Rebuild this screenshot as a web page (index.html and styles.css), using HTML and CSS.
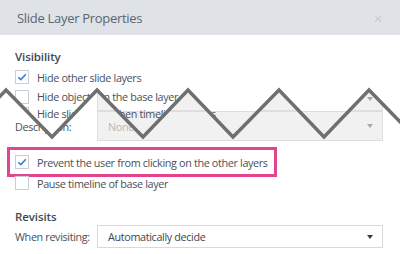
FILE: index.html
```html
<!DOCTYPE html>
<html>
<head>
<meta charset="utf-8">
<link rel="stylesheet" href="styles.css">
</head>
<body>
<div class="dialog">
  <header class="titlebar">
    <span class="title">Slide Layer Properties</span>
    <span class="close">×</span>
  </header>
  <div class="body">
    <h3 class="section first">Visibility</h3>
    <div class="check first-row"><span class="box"><svg viewBox="0 0 13 13"><path d="M2.5 6.8 L5.2 9.3 L10.6 3.6"/></svg></span>Hide other slide layers</div>
    <div class="tear">
      <div class="check tight"><span class="box"></span>Hide objects on the base layer</div>
      <div class="check tight"><span class="box"></span>Hide slide layer when timeline finishes</div>
    </div>
    <div class="highlight">
      <div class="check"><span class="box"><svg viewBox="0 0 13 13"><path d="M2.5 6.8 L5.2 9.3 L10.6 3.6"/></svg></span>Prevent the user from clicking on the other layers</div>
    </div>
    <div class="check pause"><span class="box"></span>Pause timeline of base layer</div>
    <h3 class="section revisits">Revisits</h3>
    <div class="field">
      <span class="label">When revisiting:</span>
      <div class="select"><span>Automatically decide</span><span class="arrow"></span></div>
    </div>
  </div>

  <div class="select disabled boxb-under"><span></span><span class="arrow"></span></div>

  <div class="torn">
    <div class="select disabled boxa"><span></span><span class="arrow"></span></div>
    <div class="desc-row">
      <span class="label">Description:</span>
      <div class="select disabled boxb"><span>None</span><span class="arrow"></span></div>
    </div>
  </div>

  <svg class="zigzag" viewBox="0 0 400 254" width="400" height="254">
    <polyline points="-39,137 6,90 52,137 97,90 143,137 188,90 233,137 279,90 324,137 369,90 415,137"/>
  </svg>
</div>
</body>
</html>
```

FILE: styles.css
```css
* { box-sizing: border-box; }
html, body { margin: 0; padding: 0; background: #ffffff; }
body {
  font-family: "Open Sans", "Noto Sans", sans-serif;
  font-size: 10.8px;
  letter-spacing: -0.35px;
  color: #4a5058;
}
.dialog {
  position: relative;
  width: 400px;
  height: 254px;
  overflow: hidden;
  background: #ffffff;
}
.titlebar {
  height: 35px;
  background: #dfe3e7;
  display: flex;
  align-items: center;
  justify-content: space-between;
  padding: 0 16px 0 16px;
}
.title {
  font-size: 13px;
  letter-spacing: -0.3px;
  color: #5a6570;
  padding-top: 1px;
  padding-left: 1px;
}
.close {
  font-size: 15px;
  color: #c6ccd2;
  padding-right: 2px;
}
.body {
  position: relative;
  z-index: 1;
  padding: 0 15px;
  display: flex;
  flex-direction: column;
}
.section {
  margin: 0;
  font-size: 11.5px;
  line-height: 16px;
  font-weight: 600;
  color: #3e4852;
  letter-spacing: -0.1px;
}
.section.first { margin-top: 14px; }
.check {
  display: flex;
  align-items: center;
  height: 20px;
  gap: 8px;
  white-space: nowrap;
  flex: none;
}
.first-row { margin-top: 2px; }
.check.tight { height: 17px; }
.box {
  width: 14px;
  height: 14px;
  border: 1px solid #c9ced4;
  background: #fff;
  flex: none;
  display: flex;
}
.box svg { width: 12px; height: 12px; }
.box path {
  fill: none;
  stroke: #2c7fd6;
  stroke-width: 1.7;
}
.tear {
  height: 60px;
  padding-top: 1px;
  flex: none;
}
.highlight {
  margin-left: -8px;
  width: 270px;
  height: 30px;
  border: 3px solid #e2448f;
  padding-left: 5px;
  display: flex;
  align-items: center;
  flex: none;
}
.pause { margin-top: -3px; height: 18px; }
.revisits { margin-top: 17px; }
.field {
  display: flex;
  align-items: center;
  gap: 0;
}
.field .label { width: 82px; }
.select {
  display: flex;
  align-items: center;
  justify-content: space-between;
  width: 286px;
  height: 23px;
  border: 1px solid #d6dadf;
  background: #fff;
  padding: 0 9px 0 10px;
  color: #3e4650;
}
.arrow {
  width: 0;
  height: 0;
  border-left: 3.5px solid transparent;
  border-right: 3.5px solid transparent;
  border-top: 4px solid #3a3a3a;
}
.select.disabled {
  background: #f1f1f1;
  border-color: #dedede;
  color: #b8b8b8;
}
.select.disabled .arrow { border-top-color: #a8a8a8; }
.boxb-under {
  position: absolute;
  z-index: 0;
  left: 97px;
  top: 111px;
  height: 30px;
  border-top-color: #c7d3de;
}
.torn {
  position: absolute;
  z-index: 2;
  left: 0;
  top: 84px;
  width: 400px;
  height: 60px;
  background: #fff;
  clip-path: polygon(-39px 53px, 6px 6px, 52px 53px, 97px 6px, 143px 53px, 188px 6px, 233px 53px, 279px 6px, 324px 53px, 369px 6px, 415px 53px, 415px 60px, -39px 60px);
}
.boxa {
  position: absolute;
  left: 97px;
  top: 3px;
  height: 24px;
  border-bottom-color: #c7d3de;
}
.desc-row {
  position: absolute;
  left: 15px;
  top: 27px;
  display: flex;
  align-items: center;
}
.desc-row .label { width: 82px; }
.boxb { height: 30px; }
.zigzag {
  position: absolute;
  z-index: 3;
  left: 0;
  top: 0;
  pointer-events: none;
}
.zigzag polyline {
  fill: none;
  stroke: #6f6f6f;
  stroke-width: 3.5;
  stroke-linejoin: miter;
}
```
